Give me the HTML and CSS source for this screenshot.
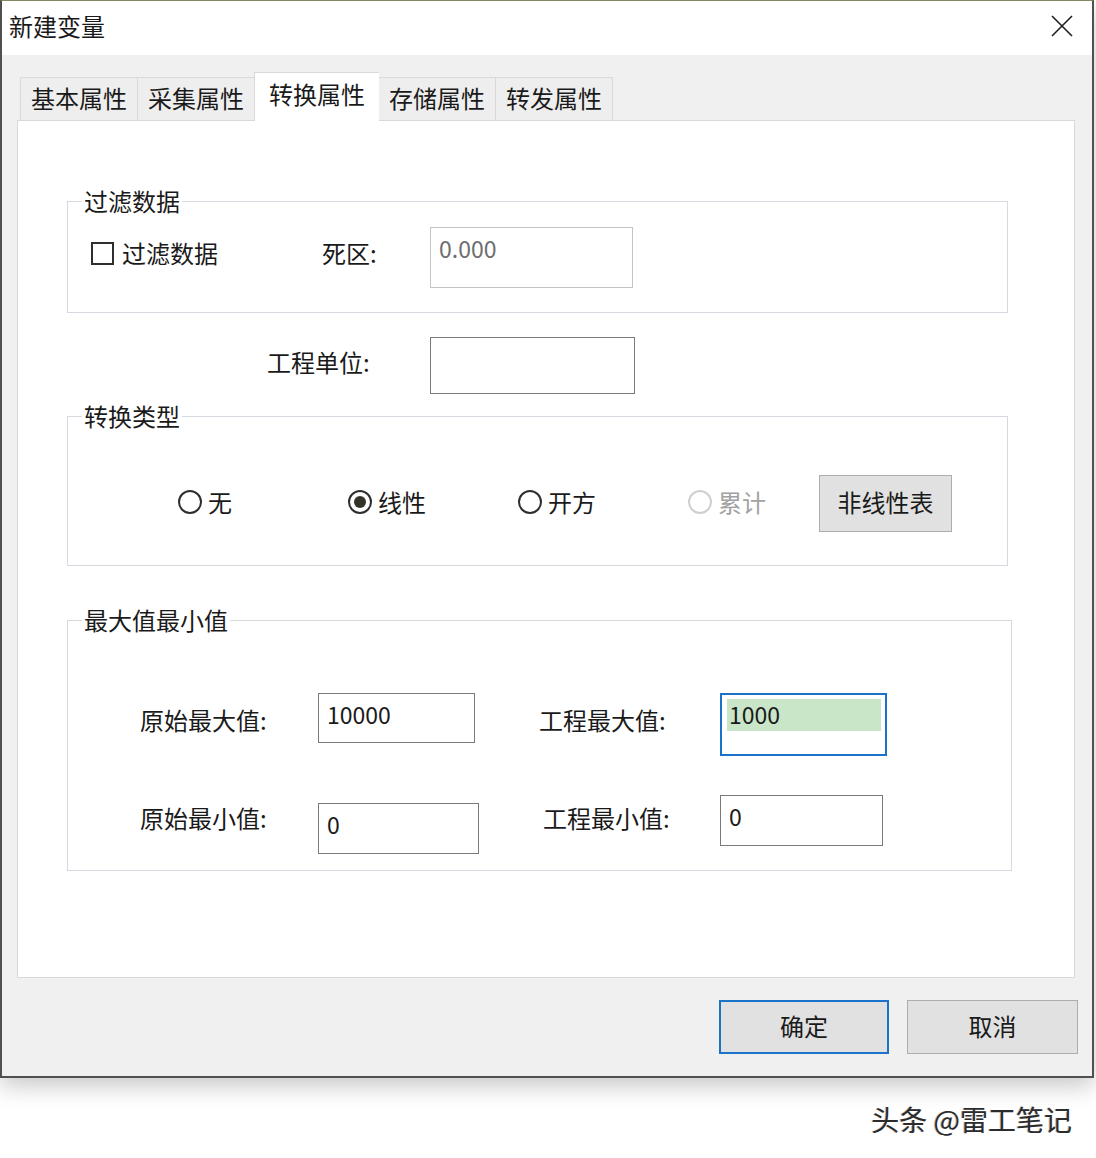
FILE: index.html
```html
<!DOCTYPE html>
<html lang="zh-CN">
<head>
  <meta charset="UTF-8">
  <title>新建变量</title>
  <link rel="stylesheet" href="styles.css">
</head>
<body>
  <div class="window">
    <div class="titlebar">
      <span class="title">新建变量</span>
      <svg class="close" width="24" height="24" viewBox="0 0 24 24"><path d="M2 2 L22 22 M22 2 L2 22" stroke="#1e1e1e" stroke-width="1.6" fill="none"/></svg>
    </div>
    <div class="dialog">
      <div class="tabs">
        <div class="tab">基本属性</div>
        <div class="tab">采集属性</div>
        <div class="tab active">转换属性</div>
        <div class="tab">存储属性</div>
        <div class="tab">转发属性</div>
      </div>
      <div class="panel">
        <fieldset class="group g-filter">
          <legend>过滤数据</legend>
          <div class="filter-row">
            <label class="check"><span class="box"></span>过滤数据</label>
            <span class="lbl-dead">死区:</span>
            <div class="textbox disabled tb-dead">0.000</div>
          </div>
        </fieldset>

        <div class="unit-row">
          <span class="lbl-unit">工程单位:</span>
          <div class="textbox tb-unit"></div>
        </div>

        <fieldset class="group g-type">
          <legend>转换类型</legend>
          <div class="radio-row">
            <span class="radio"><i></i>无</span>
            <span class="radio on"><i></i>线性</span>
            <span class="radio"><i></i>开方</span>
            <span class="radio off"><i></i>累计</span>
            <div class="btn btn-table">非线性表</div>
          </div>
        </fieldset>

        <fieldset class="group g-range">
          <legend>最大值最小值</legend>
          <div class="range-row r1">
            <span class="lbl lbl-a">原始最大值:</span>
            <div class="textbox tb-a1">10000</div>
            <span class="lbl lbl-b">工程最大值:</span>
            <div class="textbox focus tb-b1"><span class="sel">1000</span></div>
          </div>
          <div class="range-row r2">
            <span class="lbl lbl-a">原始最小值:</span>
            <div class="textbox tb-a2">0</div>
            <span class="lbl lbl-b">工程最小值:</span>
            <div class="textbox tb-b2">0</div>
          </div>
        </fieldset>
      </div>
      <div class="actions">
        <div class="btn btn-ok">确定</div>
        <div class="btn btn-cancel">取消</div>
      </div>
    </div>
  </div>
  <div class="mark">头条 @雷工笔记</div>
</body>
</html>
```

FILE: styles.css
```css
* { box-sizing: border-box; margin: 0; padding: 0; }
body {
  background: #fff;
  font-family: "Noto Sans CJK SC", "Microsoft YaHei", "Noto Sans", sans-serif;
  font-size: 24px;
  color: #1a1a1a;
  width: 1096px;
  overflow: hidden;
}

/* janela */
.window {
  width: 1094px;
  border: 2px solid #505050;
  border-top: 1px solid #7e8a62;
  background: #f0f0f0;
  box-shadow: 0 8px 22px rgba(0,0,0,0.22);
}
.titlebar {
  height: 54px;
  background: #fff;
  display: flex;
  align-items: center;
  justify-content: space-between;
  padding: 0 18px 4px 7px;
}
.title { font-size: 24px; line-height: 30px; }
.close { display: block; }

.dialog { padding: 17px 17px 22px 15px; }

/* abas */
.tabs { display: flex; align-items: flex-end; height: 48px; margin-left: 3px; }
.tab {
  height: 43px;
  padding: 0 10px;
  border: 1px solid #d9d9d9;
  border-bottom: none;
  border-right: none;
  background: #eeeeee;
  font-size: 24px;
  line-height: 40px;
  text-align: center;
}
.tab:last-child { border-right: 1px solid #d9d9d9; }
.tab.active {
  height: 49px;
  margin-bottom: -1px;
  padding: 0 14px;
  background: #fff;
  position: relative;
  z-index: 1;
  line-height: 42px;
}
.tab.active + .tab { border-left: none; }

.panel {
  height: 858px;
  background: #fff;
  border: 1px solid #d9d9d9;
  padding: 66px 0 0 49px;
}

/* grupos */
.group {
  border: 1px solid #d6dae0;
  padding: 12px 0 24px 0;
  width: 941px;
}
.group legend {
  margin-left: 14px;
  padding: 0 2px;
  line-height: 28px;
  font-size: 24px;
}
.g-type { margin-top: 8px; padding: 45px 0 33px 0; }
.g-range { margin-top: 40px; width: 945px; padding: 59px 0 16px 0; }

.textbox {
  background: #fff;
  border: 1px solid #7a7a7a;
  padding: 6px 8px 0 8px;
  line-height: 28px;
  font-size: 23px;
  color: #1a1a1a;
}
.textbox.disabled { border-color: #c4c4c4; color: #6e6e6e; }
.textbox.focus { border: 2px solid #1a73c9; padding: 4px 4px 0 5px; }
.sel { display: block; height: 32px; line-height: 31px; background: #c9e7c8; padding-left: 2px; }

/* filtro */
.filter-row { display: flex; align-items: flex-start; padding-left: 23px; height: 61px; }
.check { display: flex; align-items: center; width: 231px; line-height: 30px; margin-top: 11px; }
.box { width: 23px; height: 23px; border: 2px solid #2e2e2e; background: #fff; margin-right: 8px; }
.lbl-dead { width: 108px; line-height: 30px; margin-top: 11px; }
.tb-dead { width: 203px; height: 61px; }

.unit-row { display: flex; align-items: flex-start; margin: 24px 0 0 200px; }
.lbl-unit { width: 163px; line-height: 30px; margin-top: 10px; }
.tb-unit { width: 205px; height: 57px; }

/* tipo */
.radio-row { display: flex; align-items: flex-start; padding-left: 110px; height: 57px; }
.radio { display: flex; align-items: center; width: 170px; line-height: 30px; margin-top: 12px; }
.radio i {
  width: 24px; height: 24px;
  border: 2px solid #2e2e2e;
  border-radius: 50%;
  margin-right: 6px;
  display: flex; align-items: center; justify-content: center;
}
.radio.on i::after { content: ""; width: 12px; height: 12px; border-radius: 50%; background: #33332a; }
.radio.off { width: 131px; color: #a2a2a2; }
.radio.off i { border-color: #cfcfcf; }

.btn {
  background: #e1e1e1;
  border: 1px solid #adadad;
  text-align: center;
  font-size: 24px;
}
.btn-table { width: 133px; height: 57px; line-height: 52px; }

/* faixa */
.range-row { display: flex; align-items: flex-start; padding-left: 72px; }
.r2 { margin-top: 39px; }
.lbl { line-height: 32px; white-space: nowrap; }
.r1 .lbl { margin-top: 11px; }
.r2 .lbl { margin-top: 7px; }
.lbl-a { width: 178px; }
.lbl-b { margin-left: 64px; }
.r1 .lbl-b { width: 181px; }
.r2 .lbl-b { width: 177px; }
.tb-a1 { width: 157px; height: 50px; }
.tb-b1 { width: 167px; height: 63px; }
.tb-a2 { width: 161px; height: 51px; margin-top: 8px; }
.tb-b2 { width: 163px; height: 51px; }

/* botoes */
.actions { display: flex; justify-content: flex-end; gap: 18px; margin: 22px -3px 0 0; }
.btn-ok { width: 170px; height: 54px; line-height: 48px; border: 2px solid #1a73c9; }
.btn-cancel { width: 171px; height: 54px; line-height: 50px; }

.mark {
  text-align: right;
  padding-right: 24px;
  margin-top: 22px;
  font-size: 28px;
  line-height: 38px;
  color: #2c2c2c;
  text-shadow: 1px 1px 0 #fff, -1px 0 0 #bbb;
}
```
